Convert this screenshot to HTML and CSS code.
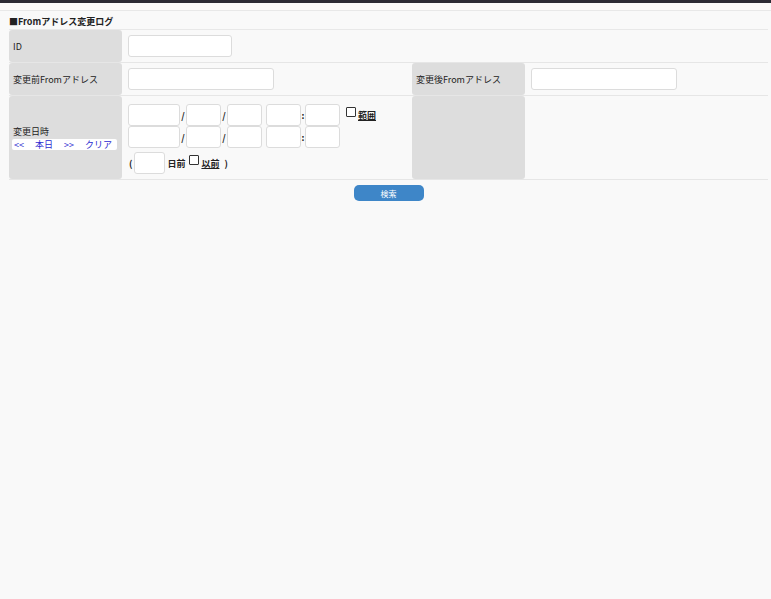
FILE: index.html
```html
<!DOCTYPE html>
<html lang="ja">
<head>
  <meta charset="UTF-8" />
  <title>Fromアドレス変更ログ</title>
  <link rel="stylesheet" href="styles.css">
</head>
<body>
  <div class="topbar"></div>
  <div class="subbar"></div>
  <div class="page">
    <div class="title">■Fromアドレス変更ログ</div>
    <div class="grid">
      <div class="row r1">
        <div class="label">ID</div>
        <div class="value"><input type="text" class="in-id"></div>
      </div>
      <div class="row r2">
        <div class="label">変更前Fromアドレス</div>
        <div class="value half"><input type="text" class="in-addr"></div>
        <div class="label">変更後Fromアドレス</div>
        <div class="value"><input type="text" class="in-addr"></div>
      </div>
      <div class="row r3">
        <div class="label date-label">
          <div>変更日時</div>
          <div class="links"><a>&lt;&lt;</a><a>本日</a><a>&gt;&gt;</a><a>クリア</a></div>
        </div>
        <div class="value half dates">
          <div class="line">
            <input type="text" class="d-y"><span class="sep">/</span>
            <input type="text" class="d-s"><span class="sep">/</span>
            <input type="text" class="d-s">
            <input type="text" class="d-s gap"><span class="colon">:</span>
            <input type="text" class="d-s">
            <input type="checkbox" class="cb"><span class="ul">範囲</span>
          </div>
          <div class="line">
            <input type="text" class="d-y"><span class="sep">/</span>
            <input type="text" class="d-s"><span class="sep">/</span>
            <input type="text" class="d-s">
            <input type="text" class="d-s gap"><span class="colon">:</span>
            <input type="text" class="d-s">
          </div>
          <div class="line days">
            <span class="paren">(</span>
            <input type="text" class="d-n">
            <span class="b">日前</span>
            <input type="checkbox" class="cb cb2"><span class="ul">以前</span>
            <span class="paren close">)</span>
          </div>
        </div>
        <div class="label"></div>
        <div class="value"></div>
      </div>
    </div>
    <div class="actions">
      <button type="button" class="btn">検索</button>
    </div>
  </div>
</body>
</html>
```

FILE: styles.css
```css
body { margin: 0; background: #f9f9f9; font-family: "Noto Sans CJK JP", "Noto Sans", sans-serif; font-size: 9px; color: #222; }
.topbar { height: 3px; background: #2b2a34; }
.subbar { height: 7px; border-bottom: 1px solid #e8e8e8; }
.page { margin: 0 3px 0 9px; }
.title { height: 15px; padding-top: 3px; line-height: 15px; font-weight: bold; }

.grid { border-top: 1px solid #e8e8e8; }
.row { display: flex; border-bottom: 1px solid #e6e6e6; }
.r1, .r2 { height: 32px; }
.r3 { min-height: 83px; }
.label {
  width: 113px; box-sizing: border-box; padding: 0 4px;
  background: #dddddd; border-radius: 3px;
  display: flex; align-items: center;
}
.value { flex: 1; display: flex; align-items: center; padding-left: 6px; }
.value.half { flex: 0 0 284px; }

input[type="text"] {
  box-sizing: border-box; height: 22px; margin: 0; padding: 0 3px;
  background: #fff; border: 1px solid #dcdcdc; border-radius: 3px;
  font-size: 9px;
}
.in-id { width: 104px; }
.in-addr { width: 146px; }

.date-label { flex-direction: column; align-items: flex-start; justify-content: center; padding-left: 3px; }
.date-label > div:first-child { padding-left: 1px; line-height: 12px; }
.links {
  margin-top: 1px; width: 105px; height: 11px; line-height: 11px;
  background: #fff; border-radius: 2px; box-sizing: border-box; padding-left: 2px;
  display: flex; gap: 11px;
}
.links a { color: #2b2bd0; }

.dates { flex-direction: column; align-items: flex-start; padding-top: 8px; padding-bottom: 5px; }
.line { display: flex; align-items: center; height: 22px; }
.d-y { width: 52px; }
.d-s { width: 35px; }
.d-n { width: 31px; margin-left: 2px !important; }
.gap { margin-left: 4px !important; }
.sep { width: 6px; text-align: center; font-weight: bold; }
.colon { width: 4px; text-align: center; font-weight: bold; }
.cb {
  appearance: none; -webkit-appearance: none; box-sizing: border-box;
  width: 10px; height: 10px; margin: 0 2px 0 6px; align-self: flex-start; margin-top: 3px;
  border: 1px solid #333; border-radius: 1px; background: #fff;
}
.ul { text-decoration: underline; font-weight: bold; align-self: flex-start; margin-top: 5px; }
.days { margin-top: 4px; }
.days .cb2 { margin-left: 4px; }
.paren { font-weight: bold; margin-left: 1px; }
.close { margin-left: 5px; }
.b { font-weight: bold; margin-left: 2px; }

.actions { display: flex; justify-content: center; padding-top: 5px; }
.btn {
  width: 70px; height: 16px; padding: 0; border: none; border-radius: 5px;
  background: #3e86c8; color: #fff; font-family: inherit; font-size: 8px;
}
```
